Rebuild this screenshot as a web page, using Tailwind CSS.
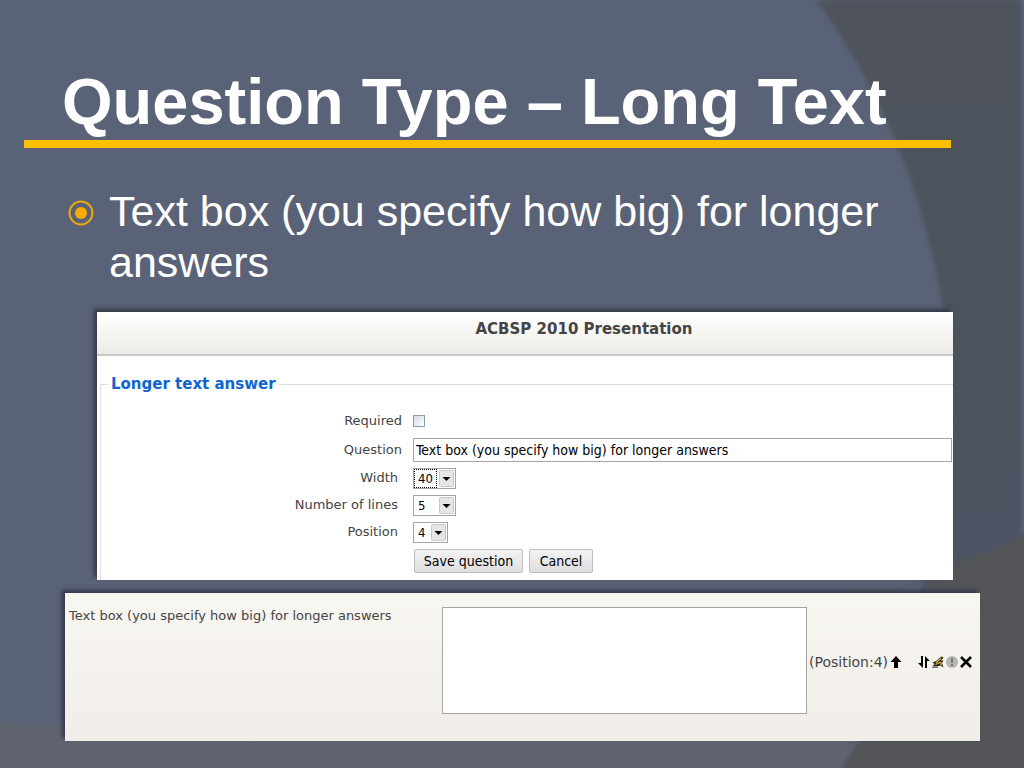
<!DOCTYPE html>
<html lang="en">
<head>
    <meta charset="UTF-8">
    <meta name="viewport" content="width=device-width, initial-scale=1.0">
    <title>Question Type – Long Text</title>
    <script src="https://cdn.jsdelivr.net/npm/@tailwindcss/browser@4"></script>
</head>
<body class="bg-[#5a6277] font-['Liberation_Sans',Arial,sans-serif]">
    <main class="relative isolate min-h-screen overflow-hidden flex flex-col">
        <!-- Slide background -->
        <svg class="absolute inset-0 -z-10 w-full h-full" viewBox="0 0 1024 768" preserveAspectRatio="none" aria-hidden="true">
            <defs>
                <filter id="soft" x="-10%" y="-10%" width="120%" height="120%">
                    <feGaussianBlur stdDeviation="2"/>
                </filter>
                <linearGradient id="side" x1="0" y1="0" x2="0" y2="1">
                    <stop offset="0" stop-color="#4f535c"/>
                    <stop offset="0.55" stop-color="#4e525d"/>
                    <stop offset="0.8" stop-color="#4e5467"/>
                </linearGradient>
            </defs>
            <rect width="1024" height="768" fill="#5a6277"/>
            <path filter="url(#soft)" fill="url(#side)" d="M816 0H1021V768H838C905 670 950 530 950 400C950 250 890 100 816 0Z"/>
            <path filter="url(#soft)" fill="#5f646f" d="M-8 722Q450 735 700 650L860 590L920 590Q905 670 838 776H-8Z"/>
            <path filter="url(#soft)" fill="#525459" d="M1030 530Q960 565 890 592L930 580Q905 670 838 776H1030Z"/>
        </svg>

        <h1 class="pl-[62px] pt-[65px] pb-px text-[65px] leading-[74px] font-bold text-white whitespace-nowrap">Question Type – Long Text</h1>
        <div class="ml-6 mr-[73px] h-2 bg-[#fdbf03]"></div>

        <ul class="mt-[38px] ml-[68px] mr-[73px]">
            <li class="flex gap-[15px] text-[43px] leading-[51px] text-white">
                <svg class="w-[26px] h-[26px] mt-[14px] shrink-0" viewBox="0 0 26 26" aria-hidden="true">
                    <circle cx="13" cy="13" r="11.5" fill="none" stroke="#e9ab0c" stroke-width="2"/>
                    <circle cx="13" cy="13" r="6" fill="#fbaa05"/>
                </svg>
                <span>Text box (you specify how big) for longer answers</span>
            </li>
        </ul>

        <!-- Question editor -->
        <form class="mt-[24px] ml-[97px] mr-[71px] h-[268px] overflow-hidden bg-white shadow-[-3px_-3px_4px_#353948] font-['DejaVu_Sans',Verdana,sans-serif] text-[13px] text-[#444]">
            <h2 class="h-11 pl-[118px] pt-[7px] leading-5 text-center text-[15px] font-bold text-[#444] bg-linear-to-b from-white to-[#edebe6] border-b-2 border-[#c8c8c6]">ACBSP 2010 Presentation</h2>
            <fieldset class="mt-[18px] ml-[3px] border-l border-t border-[#dcdcdc]">
                <legend class="ml-[7px] px-[3px] leading-5 text-[15px] font-bold text-[#0d66d0]">Longer text answer</legend>
                <div class="grid grid-cols-[301px_1fr] gap-x-[11px] gap-y-[6px] pt-[21px] pb-2">
                    <label for="required" class="text-right leading-3 pb-[7px]">Required</label>
                    <input id="required" type="checkbox" class="appearance-none w-3 h-3 border border-[#8a9bb5] bg-linear-to-br from-[#d5dbe4] to-white">
                    <label for="question" class="text-right leading-5">Question</label>
                    <input id="question" type="text" value="Text box (you specify how big) for longer answers" class="h-6 mt-[-2px] mr-px px-[2px] border border-[#a5a5a5] bg-white text-[14px] text-black font-['DejaVu_Sans_Condensed',Tahoma,sans-serif]">
                    <label for="width" class="text-right pr-1 leading-5">Width</label>
                    <div class="relative w-[43px] h-[21px]">
                        <select id="width" class="appearance-none block w-full h-full pl-1 border border-[#a5a5a5] bg-white text-black font-['DejaVu_Sans_Condensed',Tahoma,sans-serif]"><option>40</option></select>
                        <span class="absolute left-px top-px w-[23px] h-[19px] border border-dotted border-black pointer-events-none"></span>
                        <svg class="absolute right-[2px] top-[2px] w-[15px] h-[17px] pointer-events-none" viewBox="0 0 15 17"><rect x=".5" y=".5" width="14" height="16" rx="1" fill="#e6e6e6" stroke="#c9c9c9"/><path d="M3.500 7h8l-4 4z"/></svg>
                    </div>
                    <label for="lines" class="text-right pr-1 leading-5">Number of lines</label>
                    <div class="relative w-[43px] h-[21px]">
                        <select id="lines" class="appearance-none block w-full h-full pl-1 border border-[#a5a5a5] bg-white text-black font-['DejaVu_Sans_Condensed',Tahoma,sans-serif]"><option>5</option></select>
                        <svg class="absolute right-[2px] top-[2px] w-[15px] h-[17px] pointer-events-none" viewBox="0 0 15 17"><rect x=".5" y=".5" width="14" height="16" rx="1" fill="#e6e6e6" stroke="#c9c9c9"/><path d="M3.500 7h8l-4 4z"/></svg>
                    </div>
                    <label for="position" class="text-right pr-1 leading-5">Position</label>
                    <div class="relative w-[35px] h-[21px]">
                        <select id="position" class="appearance-none block w-full h-full pl-1 border border-[#a5a5a5] bg-white text-black font-['DejaVu_Sans_Condensed',Tahoma,sans-serif]"><option>4</option></select>
                        <svg class="absolute right-[2px] top-[2px] w-[15px] h-[17px] pointer-events-none" viewBox="0 0 15 17"><rect x=".5" y=".5" width="14" height="16" rx="1" fill="#e6e6e6" stroke="#c9c9c9"/><path d="M3.500 7h8l-4 4z"/></svg>
                    </div>
                    <div class="col-start-2 flex gap-[6px] pl-px text-[14px] text-black font-['DejaVu_Sans_Condensed',Tahoma,sans-serif]">
                        <button type="button" class="w-[109px] h-6 rounded-xs border border-[#bdbdbd] bg-linear-to-b from-[#f3f3f3] to-[#dedede]">Save question</button>
                        <button type="button" class="w-[64px] h-6 rounded-xs border border-[#bdbdbd] bg-linear-to-b from-[#f3f3f3] to-[#dedede]">Cancel</button>
                    </div>
                </div>
            </fieldset>
        </form>

        <!-- Question preview -->
        <section class="mt-[13px] ml-[65px] mr-[44px] mb-[27px] h-[148px] flex bg-linear-to-b from-[#f8f6f1] to-[#f1eeea] shadow-[-3px_-3px_4px_#353948] font-['DejaVu_Sans',Verdana,sans-serif] text-[#444]">
            <label for="answer" class="w-[377px] shrink-0 pl-1 pt-[13px] text-[13px] leading-5">Text box (you specify how big) for longer answers</label>
            <textarea id="answer" class="mt-[14px] w-[365px] h-[107px] min-w-0 resize-none border border-[#a5a5a5] bg-white"></textarea>
            <div class="mt-[59px] ml-[2px] h-5 flex items-center gap-[2px] text-[14px] whitespace-nowrap">
                <span>(Position:4)</span>
                <button type="button" aria-label="Move up" class="mr-[14px]"><svg class="w-3 h-3" viewBox="0 0 12 12"><path d="M6 0l5.500 6H8v6H4V6H.5z"/></svg></button>
                <button type="button" aria-label="Reorder"><svg class="w-3 h-3" viewBox="0 0 12 12"><path d="M3 0h2v12L0 7h3zM7 12h2V5h3L7 0z"/></svg></button>
                <button type="button" aria-label="Edit"><svg class="w-3 h-3" viewBox="0 0 12 12"><path d="M.5 6.500L4 5 9.500.5 11.500 1.500 9 4.500h2.500L10 7l1.500 4.500L8.500 9.500 5 10.500H.5L2.500 8z" fill="#33290f"/><path d="M4 6.500L9 2.500M3.500 8.500l5-2.500M9 6v3" stroke="#d6b052" stroke-width="1.300"/><path d="M0 11.500h6" stroke="#77736a"/></svg></button>
                <button type="button" aria-label="Required"><svg class="w-3 h-3" viewBox="0 0 12 12"><circle cx="6" cy="6" r="6" fill="#b5b5b5"/><path d="M5 2h2v5H5zM5 8h2v2H5z" fill="#777"/></svg></button>
                <button type="button" aria-label="Delete"><svg class="w-3 h-3" viewBox="0 0 12 12"><path d="M1 1l10 10M11 1L1 11" stroke="#000" stroke-width="2.500"/></svg></button>
            </div>
        </section>
    </main>
</body>
</html>
